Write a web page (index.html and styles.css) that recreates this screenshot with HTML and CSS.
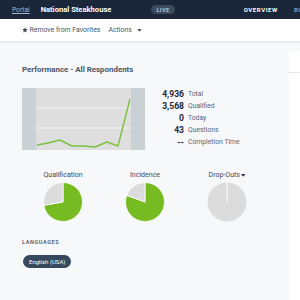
FILE: index.html
```html
<!DOCTYPE html>
<html>
<head>
<meta charset="utf-8">
<link rel="stylesheet" href="styles.css">
</head>
<body>
<header class="topbar">
  <span class="portal">Portal</span>
  <span class="sep"></span>
  <span class="project">National Steakhouse</span>
  <span class="live">LIVE</span>
  <nav class="nav">
    <span class="nav-item active">OVERVIEW</span>
    <span class="nav-item">BUILD</span>
  </nav>
</header>
<div class="subbar">
  <span class="fav"><svg class="star" viewBox="0 0 10 10" width="6" height="6"><path d="M5 0.4 L6.35 3.4 L9.6 3.7 L7.15 5.85 L7.9 9.1 L5 7.4 L2.1 9.1 L2.85 5.85 L0.4 3.7 L3.65 3.4 Z" fill="#3f4a5a"/></svg>Remove from Favorites</span>
  <span class="actions">Actions<svg class="caret" viewBox="0 0 6 4" width="5" height="3"><path d="M0 0 H6 L3 3.5 Z" fill="#4a5566"/></svg></span>
</div>
<main class="main">
  <section class="content">
    <h2 class="title">Performance - All Respondents</h2>
    <div class="perf">
      <svg class="chart" width="123" height="62" viewBox="0 0 123 62">
        <rect x="0" y="0" width="123" height="62" fill="#dedede"/>
        <rect x="0" y="0" width="14" height="62" fill="#c9d1d5"/>
        <rect x="109" y="0" width="14" height="62" fill="#c9d1d5"/>
        <line x1="14" y1="20" x2="109" y2="20" stroke="#f4f4f4" stroke-width="1"/>
        <line x1="14" y1="40" x2="109" y2="40" stroke="#f4f4f4" stroke-width="1"/>
        <polyline points="15,57 26,55 38,52 50,58 62,58 73,59 85,54 96,58 108,11" fill="none" stroke="#7cc242" stroke-width="1.4" stroke-linejoin="round"/>
      </svg>
      <div class="stats">
        <span class="num">4,936</span><span class="lbl">Total</span>
        <span class="num">3,568</span><span class="lbl">Qualified</span>
        <span class="num">0</span><span class="lbl">Today</span>
        <span class="num">43</span><span class="lbl">Questions</span>
        <span class="num">--</span><span class="lbl">Completion Time</span>
      </div>
    </div>
    <div class="pies">
      <div class="pie">
        <div class="pie-label">Qualification</div>
        <svg width="40" height="40" viewBox="0 0 40 40">
          <path d="M20 20 L20 0.5 A19.5 19.5 0 1 1 0.78 23.29 Z" fill="#76bb22" stroke="#fff" stroke-width="0.8"/>
          <path d="M20 20 L0.78 23.29 A19.5 19.5 0 0 1 20 0.5 Z" fill="#dcdcdc" stroke="#fff" stroke-width="0.8"/>
        </svg>
      </div>
      <div class="pie">
        <div class="pie-label">Incidence</div>
        <svg width="40" height="40" viewBox="0 0 40 40">
          <path d="M20 20 L20 0.5 A19.5 19.5 0 1 1 1.68 13.33 Z" fill="#76bb22" stroke="#fff" stroke-width="0.8"/>
          <path d="M20 20 L1.68 13.33 A19.5 19.5 0 0 1 20 0.5 Z" fill="#dcdcdc" stroke="#fff" stroke-width="0.8"/>
        </svg>
      </div>
      <div class="pie">
        <div class="pie-label">Drop-Outs <svg class="caret" viewBox="0 0 6 4" width="4.5" height="3"><path d="M0 0 H6 L3 3.5 Z" fill="#2b3545"/></svg></div>
        <svg width="40" height="40" viewBox="0 0 40 40">
          <circle cx="20" cy="20" r="19.5" fill="#dcdcdc"/>
          <line x1="20" y1="20" x2="20" y2="0.5" stroke="#fff" stroke-width="1"/>
        </svg>
      </div>
    </div>
    <div class="lang-title">LANGUAGES</div>
    <span class="pill">English (USA)</span>
  </section>
  <aside class="side">
    <div class="side-head"></div>
  </aside>
</main>
</body>
</html>
```
FILE: styles.css
```css
* { box-sizing: border-box; }
html, body { margin: 0; padding: 0; }
body {
  width: 300px;
  height: 300px;
  overflow: hidden;
  font-family: Roboto, "Liberation Sans", Arial, sans-serif;
  background: #f7f8fa;
}
.topbar {
  height: 19px;
  background: #1a2639;
  display: flex;
  align-items: center;
  padding-left: 12px;
  white-space: nowrap;
  overflow: hidden;
}
.portal {
  color: #aab3bf;
  font-size: 6.6px;
  text-decoration: underline;
}
.sep {
  width: 1px;
  height: 9px;
  background: #4b5769;
  margin: 0 6px 0 5px;
}
.project {
  color: #ffffff;
  font-weight: 700;
  font-size: 7.6px;
}
.live {
  margin-left: 40px;
  background: #3c4a5d;
  color: #b9c3d0;
  font-size: 5.5px;
  font-weight: 700;
  letter-spacing: 0.5px;
  padding: 1.5px 5px;
  border-radius: 6px;
}
.nav {
  margin-left: 69px;
  display: flex;
  gap: 16px;
}
.nav-item {
  font-size: 6px;
  font-weight: 700;
  letter-spacing: 0.6px;
  color: #8c97a7;
}
.nav-item.active { color: #ffffff; }
.subbar {
  height: 24px;
  background: #ffffff;
  border-bottom: 2px solid #e8eaee;
  display: flex;
  align-items: center;
  padding-left: 22px;
  font-size: 6.9px;
  color: #4a5566;
  white-space: nowrap;
}
.fav { display: flex; align-items: center; }
.star { margin-right: 1.5px; }
.actions { margin-left: 8px; display: flex; align-items: center; }
.actions .caret { margin-left: 5px; }
.main {
  display: flex;
}
.content {
  width: 289px;
  flex: none;
  padding: 22px 21px 0 22px;
}
.side {
  flex: 1;
  margin-top: 8px;
  background: #ffffff;
  height: 260px;
}
.side-head {
  height: 22px;
  border-bottom: 1px solid #e6e8ec;
}
.title {
  margin: 0;
  font-size: 7.9px;
  font-weight: 700;
  color: #4b5667;
  line-height: 10px;
}
.perf {
  display: flex;
  margin-top: 13px;
}
.chart { display: block; flex: none; }
.stats {
  margin-left: 9px;
  display: grid;
  grid-template-columns: 30px auto;
  column-gap: 4px;
  grid-auto-rows: 12px;
  align-items: center;
  white-space: nowrap;
}
.num {
  text-align: right;
  font-size: 8.6px;
  font-weight: 700;
  color: #1f2a38;
}
.lbl {
  font-size: 6.8px;
  color: #5a6577;
}
.pies {
  display: flex;
  margin-top: 21px;
}
.pie {
  width: 82px;
  display: flex;
  flex-direction: column;
  align-items: center;
}
.pie-label {
  font-size: 7px;
  color: #3e4959;
  line-height: 8px;
  margin-bottom: 3px;
  display: flex;
  align-items: center;
  gap: 1px;
}
.pie svg { display: block; }
.lang-title {
  margin-top: 17px;
  font-size: 5.5px;
  font-weight: 700;
  letter-spacing: 0.6px;
  color: #5d6878;
}
.pill {
  display: inline-block;
  margin-top: 10px;
  margin-left: 1px;
  background: #34495d;
  color: #ffffff;
  font-size: 6px;
  line-height: 13px;
  padding: 0 6px;
  border-radius: 7px;
}
```
